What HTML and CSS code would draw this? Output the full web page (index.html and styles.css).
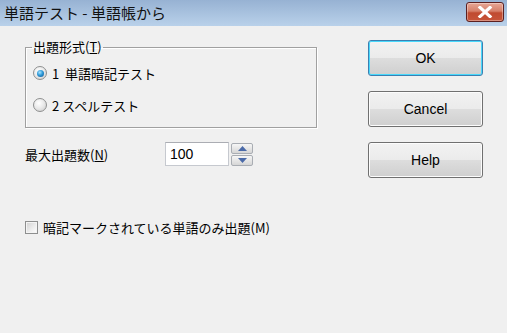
FILE: index.html
```html
<!DOCTYPE html>
<html lang="ja">
<head>
<meta charset="utf-8">
<link rel="stylesheet" href="styles.css">
</head>
<body>
<div class="window">
  <div class="titlebar">
    <span class="title">単語テスト - 単語帳から</span>
    <span class="close">
      <svg width="18" height="12" viewBox="0 0 18 12"><path d="M4 1.5 L14 10.5 M14 1.5 L4 10.5" stroke="#fff" stroke-width="3.2" stroke-linecap="square"/></svg>
    </span>
  </div>
  <div class="content">
    <div class="left">
      <fieldset class="group">
        <legend>出題形式(<u>T</u>)</legend>
        <div class="radio-row"><span class="radio checked"></span><span>1&nbsp; 単語暗記テスト</span></div>
        <div class="radio-row"><span class="radio"></span><span>2 スペルテスト</span></div>
      </fieldset>
      <div class="count-row">
        <span class="count-label">最大出題数(<u>N</u>)</span>
        <span class="spin-input">100</span>
        <span class="spin">
          <span class="spin-btn"><svg width="9" height="5" viewBox="0 0 9 5"><path d="M0 5 L4.5 0 L9 5 Z" fill="#4a6aa8"/></svg></span>
          <span class="spin-btn"><svg width="9" height="5" viewBox="0 0 9 5"><path d="M0 0 L4.5 5 L9 0 Z" fill="#4a6aa8"/></svg></span>
        </span>
      </div>
      <div class="check-row"><span class="checkbox"></span><span>暗記マークされている単語のみ出題(M)</span></div>
    </div>
    <div class="buttons">
      <div class="btn default">OK</div>
      <div class="btn">Cancel</div>
      <div class="btn">Help</div>
    </div>
  </div>
</div>
</body>
</html>
```
FILE: styles.css
```css
html, body {
  margin: 0;
  padding: 0;
  background: #f0f0f0;
}
.window {
  width: 507px;
  height: 333px;
  background: #f0f0f0;
  font-family: "Noto Sans CJK JP", "Liberation Sans", sans-serif;
  font-size: 13px;
  color: #000;
  overflow: hidden;
}
.titlebar {
  height: 26px;
  background: linear-gradient(#97b2d3, #b9d1ea);
  display: flex;
  align-items: flex-start;
  justify-content: space-between;
  padding-left: 4px;
  padding-right: 3px;
  box-sizing: border-box;
}
.title {
  font-size: 15px;
  line-height: 25px;
  color: #111;
}
.close {
  margin-top: 2px;
  width: 38px;
  height: 20px;
  box-sizing: border-box;
  border: 1px solid #5c2020;
  border-radius: 3px;
  background: linear-gradient(#e7a796 0%, #d6806a 45%, #c04a30 55%, #c7553a 100%);
  box-shadow: inset 0 0 0 1px rgba(255,255,255,0.35);
  display: flex;
  align-items: center;
  justify-content: center;
}
.content {
  display: flex;
  padding: 14px 0 0 25px;
}
.left {
  width: 292px;
}
.group {
  margin: 0;
  padding: 0 0 0 7px;
  border: 1px solid #a0a0a0;
  box-shadow: 1px 1px 0 #fff, inset 1px 1px 0 #fff;
  height: 88px;
  box-sizing: border-box;
  width: 292px;
}
.group legend {
  padding: 0 1px;
  margin-left: -1px;
  line-height: 14px;
  font-size: 13px;
}
.radio-row {
  display: flex;
  align-items: center;
  gap: 5px;
  height: 18px;
  margin-bottom: 14px;
}
.radio-row:first-of-type {
  margin-top: 10px;
}
.radio {
  width: 14px;
  height: 14px;
  border-radius: 50%;
  box-sizing: border-box;
  border: 1px solid #8e8f8f;
  background: radial-gradient(circle at 40% 35%, #ffffff 0%, #e8e8e8 50%, #c8c8c8 100%);
  position: relative;
}
.radio.checked::after {
  content: "";
  position: absolute;
  left: 2.5px;
  top: 2.5px;
  width: 7px;
  height: 7px;
  border-radius: 50%;
  background: radial-gradient(circle at 40% 35%, #a9e4ff 0%, #2f9ad8 45%, #0d4f8a 100%);
}
.count-row {
  display: flex;
  align-items: center;
  margin-top: 14px;
  height: 24px;
}
.count-label {
  width: 140px;
}
.spin-input {
  width: 64px;
  height: 24px;
  box-sizing: border-box;
  border: 1px solid #c6c9cf;
  border-top-color: #abadb3;
  background: #fff;
  padding-left: 4px;
  font-family: "Liberation Sans", sans-serif;
  font-size: 14px;
  line-height: 22px;
}
.spin {
  display: flex;
  flex-direction: column;
  gap: 1px;
  margin-left: 2px;
}
.spin-btn {
  width: 22px;
  height: 11px;
  box-sizing: border-box;
  border: 1px solid #a9adb3;
  border-radius: 2px;
  background: linear-gradient(#f6f6f6 0%, #e6e6e6 50%, #d6d6d6 100%);
  display: flex;
  align-items: center;
  justify-content: center;
}
.check-row {
  display: flex;
  align-items: center;
  gap: 5px;
  margin-top: 52px;
}
.checkbox {
  width: 13px;
  height: 13px;
  box-sizing: border-box;
  border: 1px solid #8e8f8f;
  background: linear-gradient(135deg, #d0d0d0 0%, #eeeeee 60%, #ffffff 100%);
  box-shadow: inset 0 0 0 1px #f4f4f4;
}
.buttons {
  margin-left: 51px;
  display: flex;
  flex-direction: column;
  gap: 15px;
}
.btn {
  width: 115px;
  height: 36px;
  box-sizing: border-box;
  border: 1px solid #707070;
  border-radius: 3px;
  background: linear-gradient(#f2f2f2 0%, #ebebeb 50%, #dddddd 51%, #cfcfcf 100%);
  box-shadow: inset 0 0 0 1px #fcfcfc;
  display: flex;
  align-items: center;
  justify-content: center;
  font-family: "Liberation Sans", sans-serif;
  font-size: 14px;
}
.default {
  border-color: #3c7fb1;
  box-shadow: inset 0 0 0 1px #48d8fb;
}
```
